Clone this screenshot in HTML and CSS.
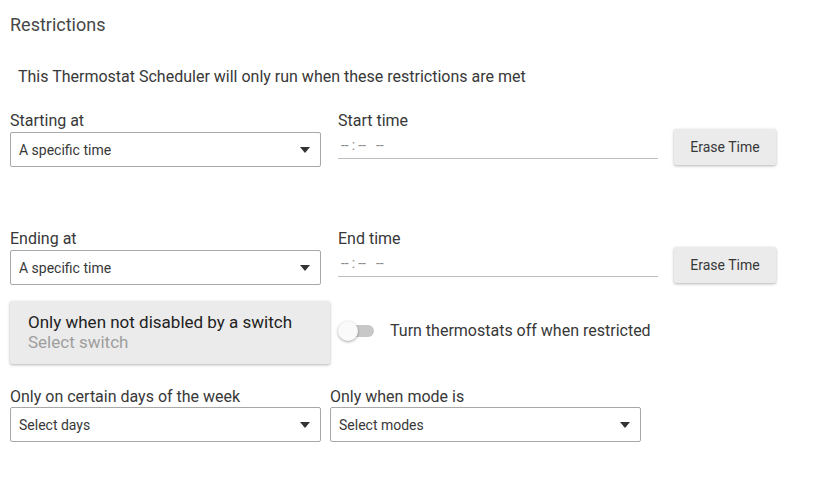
FILE: index.html
```html
<!DOCTYPE html>
<html>
<head>
<meta charset="utf-8">
<link rel="stylesheet" href="styles.css">
</head>
<body>
<div class="page">
  <h2 class="title">Restrictions</h2>
  <p class="subtitle">This Thermostat Scheduler will only run when these restrictions are met</p>

  <div class="row row-time">
    <div class="field select-field">
      <div class="label">Starting at</div>
      <div class="select"><span>A specific time</span><span class="arrow"></span></div>
    </div>
    <div class="field time-field">
      <div class="label">Start time</div>
      <div class="time-input"><span class="seg">--</span><span class="colon">:</span><span class="seg">--</span><span class="seg ampm">--</span></div>
    </div>
    <button class="btn">Erase Time</button>
  </div>

  <div class="row row-time row-end">
    <div class="field select-field">
      <div class="label">Ending at</div>
      <div class="select"><span>A specific time</span><span class="arrow"></span></div>
    </div>
    <div class="field time-field">
      <div class="label">End time</div>
      <div class="time-input"><span class="seg">--</span><span class="colon">:</span><span class="seg">--</span><span class="seg ampm">--</span></div>
    </div>
    <button class="btn">Erase Time</button>
  </div>

  <div class="row row-switch">
    <div class="card">
      <div class="card-title">Only when not disabled by a switch</div>
      <div class="card-sub">Select switch</div>
    </div>
    <div class="toggle"><span class="track"></span><span class="knob"></span></div>
    <div class="toggle-label">Turn thermostats off when restricted</div>
  </div>

  <div class="row row-bottom">
    <div class="field select-field">
      <div class="label">Only on certain days of the week</div>
      <div class="select"><span>Select days</span><span class="arrow"></span></div>
    </div>
    <div class="field select-field">
      <div class="label">Only when mode is</div>
      <div class="select"><span>Select modes</span><span class="arrow"></span></div>
    </div>
  </div>
</div>
</body>
</html>
```
FILE: styles.css
```css
* { box-sizing: border-box; }
body {
  margin: 0;
  background: #fff;
  font-family: Roboto, "Liberation Sans", sans-serif;
  color: #383838;
}
.page { padding: 13px 10px 0 10px; }
.title {
  margin: 0;
  font-size: 18px;
  font-weight: 400;
  line-height: 24px;
  color: #474747;
}
.subtitle {
  margin: 30px 0 0 8px;
  font-size: 16px;
  line-height: 20px;
  color: #383838;
}
.row { display: flex; align-items: flex-start; }
.row-time { margin-top: 24px; }
.row-end { margin-top: 62px; }
.label {
  font-size: 16px;
  line-height: 20px;
  color: #383838;
  margin-bottom: 1px;
  white-space: nowrap;
}
.select-field { width: 311px; }
.select {
  height: 35px;
  border: 1px solid #a8a8a8;
  border-radius: 2px;
  display: flex;
  align-items: center;
  justify-content: space-between;
  padding: 0 10px 0 8px;
  font-size: 14px;
  color: #383838;
}
.arrow {
  width: 0; height: 0;
  border-left: 5.5px solid transparent;
  border-right: 5.5px solid transparent;
  border-top: 6px solid #333;
}
.time-field { width: 320px; margin-left: 17px; }
.time-input {
  height: 27px;
  border-bottom: 1px solid #bdbdbd;
  font-size: 14px;
  line-height: 26px;
  color: #8a8a8a;
  padding-left: 3px;
  display: flex;
}
.colon { margin: 0 3px 0 3px; }
.ampm { margin-left: 10px; }
.btn {
  margin: 18px 0 0 16px;
  width: 102px;
  height: 36px;
  border: none;
  border-radius: 2px;
  background: #ebebeb;
  box-shadow: 0 1px 3px rgba(0,0,0,0.3);
  font-family: Roboto, "Liberation Sans", sans-serif;
  font-size: 14px;
  color: #383838;
  padding: 0;
}
.row-switch { margin-top: 16px; align-items: center; }
.card {
  width: 320px;
  height: 63px;
  padding: 11px 18px 0 18px;
  background: #ebebeb;
  border-radius: 2px;
  box-shadow: 0 1px 3px rgba(0,0,0,0.3);
  font-size: 17px;
  line-height: 20px;
}
.card-title { color: #222; }
.card-sub { color: #9e9e9e; }
.toggle {
  position: relative;
  width: 36px;
  height: 20px;
  margin-left: 8px;
  margin-top: -3px;
}
.track {
  position: absolute;
  left: 5px; top: 4px;
  width: 31px; height: 12px;
  border-radius: 6px;
  background: #c8c8c8;
}
.knob {
  position: absolute;
  left: 0; top: 0;
  width: 20px; height: 20px;
  border-radius: 50%;
  background: #fafafa;
  box-shadow: 0 1px 3px rgba(0,0,0,0.35);
}
.toggle-label {
  margin-left: 16px;
  margin-top: -4px;
  font-size: 16px;
  color: #383838;
}
.row-bottom { margin-top: 23px; gap: 9px; }
.row-bottom .label { margin-bottom: 0; }
```
